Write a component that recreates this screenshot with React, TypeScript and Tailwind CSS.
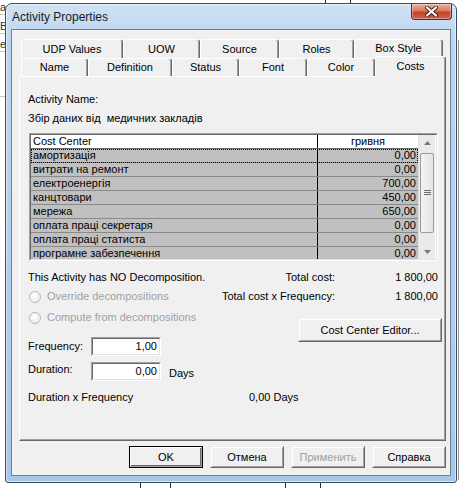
import React from "react"

const rows: [string, string][] = [
  ["амортизація", "0,00"],
  ["витрати на ремонт", "0,00"],
  ["електроенергія", "700,00"],
  ["канцтовари", "450,00"],
  ["мережа", "650,00"],
  ["оплата праці секретаря", "0,00"],
  ["оплата праці статиста", "0,00"],
  ["програмне забезпечення", "0,00"],
]

const tabBase =
  "flex items-center justify-center bg-[#f0f0f0] border-l border-t border-r border-l-white border-t-white border-r-[#696969] shadow-[inset_-1px_0_0_#a0a0a0] rounded-t-[3px]"

function Tab({ label, className }: { label: string; className: string }) {
  return <div className={`${tabBase} ${className}`}>{label}</div>
}

function Button({ label, className = "", isDefault = false, disabled = false }: { label: string; className?: string; isDefault?: boolean; disabled?: boolean }) {
  return (
    <div
      className={`flex items-center justify-center bg-[#f0f0f0] border ${
        isDefault ? "border-black" : "border-[#f0f0f0] border-r-[#696969] border-b-[#696969]"
      } ${className}`}
    >
      <div
        className={`flex h-full w-full items-center justify-center border border-t-white border-l-white border-r-[#a0a0a0] border-b-[#a0a0a0] ${
          isDefault ? "shadow-[inset_-1px_-1px_0_#696969]" : ""
        } ${disabled ? "text-[#a0a0a0]" : "text-black"}`}
      >
        {label}
      </div>
    </div>
  )
}

function Radio({ label }: { label: string }) {
  return (
    <div className="flex h-[13px] items-center text-[#a0a0a0]">
      <div className="ml-[1px] h-[12px] w-[12px] rounded-full border border-[#b9b9b9] bg-[radial-gradient(circle_at_40%_35%,#ffffff,#e6e6e6)]" />
      <span className="ml-[6px]">{label}</span>
    </div>
  )
}

function Input({ value }: { value: string }) {
  return (
    <div className="h-[19px] w-[70px] border border-t-[#a0a0a0] border-l-[#a0a0a0] border-r-white border-b-white">
      <div className="flex h-full items-center justify-end border border-t-[#696969] border-l-[#696969] border-r-[#e3e3e3] border-b-[#e3e3e3] bg-white pr-[2px]">
        {value}
      </div>
    </div>
  )
}

function ScrollBar() {
  return (
    <div className="flex w-[17px] flex-col bg-[#eaeaea] border-l border-[#e0e0e0]">
      <div className="flex h-[15px] items-center justify-center">
        <svg width="7" height="4" viewBox="0 0 7 4">
          <path d="M0 4 L3.5 0 L7 4 Z" fill="#7a7a7a" />
        </svg>
      </div>
      <div className="mx-[1px] mt-[3px] flex h-[80px] items-center justify-center rounded-[2px] border border-[#9b9b9b] bg-[linear-gradient(90deg,#f4f4f4,#e4e4e4)]">
        <svg width="7" height="6" viewBox="0 0 7 6">
          <path d="M0 0.5 H7 M0 2.5 H7 M0 4.5 H7" stroke="#6f6f6f" strokeWidth="1" />
        </svg>
      </div>
      <div className="flex-1" />
      <div className="flex h-[14px] items-center justify-center">
        <svg width="7" height="4" viewBox="0 0 7 4">
          <path d="M0 0 L3.5 4 L7 0 Z" fill="#7a7a7a" />
        </svg>
      </div>
    </div>
  )
}

function CostTable() {
  return (
    <div className="ml-[1px] mt-[8px] h-[128px] w-[409px] border border-t-[#a0a0a0] border-l-[#a0a0a0] border-r-white border-b-white">
      <div className="flex h-full border border-t-[#696969] border-l-[#696969] border-r-[#e3e3e3] border-b-[#e3e3e3] bg-white overflow-hidden">
        <div className="flex w-[387px] flex-col bg-[#c0c0c0]">
          <div className="flex h-[14px] shrink-0 border-b border-[#696969] bg-white">
            <div className="w-[287px] border-r border-r-black pl-[2px]">Cost Center</div>
            <div className="flex-1 text-center">гривня</div>
          </div>
          {rows.map(([name, value], i) => (
            <div
              key={name}
              className={`flex h-[14px] shrink-0 border-b border-[#8a8a8a] ${
                i === 0 ? "outline outline-1 outline-dotted outline-black -outline-offset-1" : ""
              }`}
            >
              <div className="w-[287px] border-r border-r-black pl-[2px]">{name}</div>
              <div className="flex-1 pr-[2px] text-right">{value}</div>
            </div>
          ))}
        </div>
        <ScrollBar />
      </div>
    </div>
  )
}

// spreadsheet lying behind the dialog
function Backdrop() {
  return (
    <svg className="absolute inset-0" width="461" height="488" viewBox="0 0 461 488">
      <path d="M0 14.5 H5 M0 33.5 H5 M0 51.5 H5 M0 96.5 H5" stroke="#c8c8c8" />
      <path d="M325.5 0 V4 M350.5 0 V4 M140.5 482 V488 M170.5 482 V488 M285.5 482 V488 M320.5 482 V488" stroke="#2a2a2a" />
      <path d="M458.5 40 V480" stroke="#9a9a9a" />
      <text x="0" y="11" fontSize="11" fill="#333" fontFamily="Liberation Sans">а</text>
      <text x="0" y="30" fontSize="11" fill="#333" fontFamily="Liberation Sans">В</text>
      <text x="0" y="48" fontSize="11" fill="#333" fontFamily="Liberation Sans">е</text>
    </svg>
  )
}

export default function App() {
  return (
    <div className="relative h-[488px] w-[461px] overflow-hidden bg-white pl-[5px] pt-[3px] font-['Liberation_Sans',Arial,sans-serif] text-[11px] leading-[13px] text-black">
      <Backdrop />
      {/* Window frame */}
      <div className="relative flex h-[480px] w-[452px] flex-col rounded-t-[7px] rounded-b-[3px] border border-[#3b4c60] bg-[linear-gradient(180deg,#cfe2f5_0%,#bcd5ee_8%,#b2cdea_60%,#a6c6e8_100%)] shadow-[inset_0_0_0_1px_rgba(255,255,255,0.55)]">
        {/* Title bar */}
        <div className="flex h-[25px] items-start">
          <span className="ml-[6px] mt-[6px] text-[12px] leading-[14px] text-[#1b1b1b]">Activity Properties</span>
          <div className="ml-auto mr-[4px] flex h-[16px] w-[41px] items-center justify-center rounded-b-[4px] border border-t-0 border-[#6b261b] bg-[linear-gradient(180deg,#eab0a2_0%,#d97a63_45%,#c3422a_55%,#d5624a_100%)] shadow-[inset_0_0_0_1px_rgba(255,255,255,0.35)]">
            <svg width="13" height="11" viewBox="0 0 13 11">
              <path d="M2 1.5 L11 9.5 M11 1.5 L2 9.5" stroke="#4a1a12" strokeWidth="4" strokeLinecap="round" />
              <path d="M2 1.5 L11 9.5 M11 1.5 L2 9.5" stroke="#ffffff" strokeWidth="2.2" strokeLinecap="round" />
            </svg>
          </div>
        </div>

        {/* Client area */}
        <div className="mx-[5px] flex h-[447px] flex-col border border-[#6f8196] bg-[#f0f0f0] pl-[7px] pr-[4px] pt-[9px]">
          {/* Back tab row */}
          <div className="ml-[2px] flex h-[19px]">
            <Tab label="UDP Values" className="w-[102px]" />
            <Tab label="UOW" className="w-[77px]" />
            <Tab label="Source" className="w-[79px]" />
            <Tab label="Roles" className="w-[75px]" />
            <Tab label="Box Style" className="w-[89px] pb-[1px]" />
          </div>
          {/* Front tab row */}
          <div className="relative z-10 ml-[2px] flex h-[18px] items-end">
            <Tab label="Name" className="h-[18px] w-[67px]" />
            <Tab label="Definition" className="h-[18px] w-[84px]" />
            <Tab label="Status" className="h-[18px] w-[67px]" />
            <Tab label="Font" className="h-[18px] w-[68px]" />
            <Tab label="Color" className="h-[18px] w-[68px]" />
            <div className={`${tabBase} relative z-10 -mb-[1px] h-[21px] w-[71px] items-start pt-[3px]`}>Costs</div>
          </div>

          {/* Tab panel */}
          <div className="flex h-[365px] w-[427px] flex-col border border-t-white border-l-white border-r-[#696969] border-b-[#696969] pl-[8px] pr-[7px] shadow-[inset_-1px_-1px_0_#a0a0a0]">
            <div className="mt-[16px]">Activity Name:</div>
            <div className="mt-[6px]">Збір даних від&nbsp; медичних закладів</div>

            <CostTable />

            <div className="mt-[10px] flex">
              <span>This Activity has NO Decomposition.</span>
              <span className="ml-auto">Total cost:</span>
              <span className="w-[103px] text-right">1 800,00</span>
            </div>

            <div className="mt-[6px] flex">
              <Radio label="Override decompositions" />
              <span className="ml-auto">Total cost x Frequency:</span>
              <span className="w-[103px] text-right">1 800,00</span>
            </div>

            <div className="mt-[8px] flex">
              <div className="flex flex-col">
                <Radio label="Compute from decompositions" />
                <div className="mt-[13px] flex items-center">
                  <span className="w-[63px]">Frequency:</span>
                  <Input value="1,00" />
                </div>
                <div className="mt-[6px] flex items-center">
                  <span className="w-[63px] -mt-[4px]">Duration:</span>
                  <Input value="0,00" />
                  <span className="ml-[8px] mt-[4px]">Days</span>
                </div>
              </div>
              <Button label="Cost Center Editor..." className="-mr-[4px] ml-auto mt-[7px] h-[24px] w-[144px]" />
            </div>

            <div className="mt-[10px] flex">
              <span className="w-[221px]">Duration x Frequency</span>
              <span>0,00 Days</span>
            </div>
          </div>

          {/* Dialog buttons */}
          <div className="mt-[5px] flex justify-end gap-[7px]">
            <Button label="OK" isDefault className="h-[22px] w-[74px]" />
            <Button label="Отмена" className="h-[22px] w-[74px]" />
            <Button label="Применить" disabled className="h-[22px] w-[74px]" />
            <Button label="Справка" className="h-[22px] w-[74px]" />
          </div>
        </div>
      </div>
    </div>
  )
}
